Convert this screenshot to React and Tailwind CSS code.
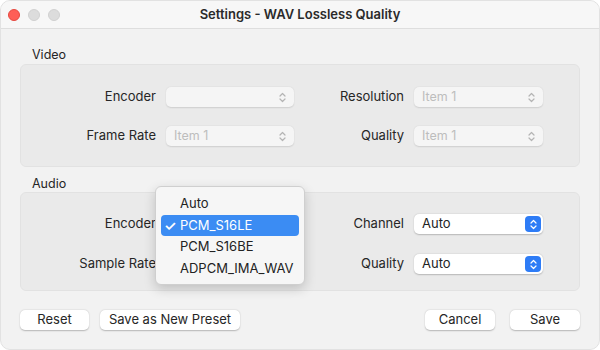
import React from "react";

function Chevrons({ color = "#b4b4b4", w = 7, h = 11 }) {
  return (
    <svg width={w} height={h} viewBox="0 0 7 11" fill="none">
      <path d="M1 4 L3.5 1.5 L6 4" stroke={color} strokeWidth="1.2" strokeLinecap="round" strokeLinejoin="round" />
      <path d="M1 7 L3.5 9.5 L6 7" stroke={color} strokeWidth="1.2" strokeLinecap="round" strokeLinejoin="round" />
    </svg>
  );
}

function DisabledSelect({ value, w }) {
  return (
    <div className={`${w} h-[20px] rounded-[5px] bg-[#f5f5f5] shadow-[0_0.5px_1.5px_rgba(0,0,0,0.12)] flex items-center justify-between pl-[8px] pr-[8px]`}>
      <span className="text-[#bdbdbd] text-[12.5px]">{value}</span>
      <Chevrons />
    </div>
  );
}

function ActiveSelect({ value, w }) {
  return (
    <div className={`${w} h-[20px] rounded-[5px] bg-white shadow-[0_0.5px_1.5px_rgba(0,0,0,0.22)] flex items-center justify-between pl-[8px] pr-[2px]`}>
      <span className="text-[#222] text-[13px]">{value}</span>
      <div className="w-[16px] h-[16px] rounded-[4px] bg-[#2e7cf6] flex items-center justify-center">
        <Chevrons color="#ffffff" w={7} h={11} />
      </div>
    </div>
  );
}

function Label({ children, w }) {
  return <div className={`${w} text-right pr-[10px] text-[13px] text-[#262626]`}>{children}</div>;
}

function Button({ children, w }) {
  return (
    <div className={`${w} h-[20px] rounded-[5px] bg-white shadow-[0_0.5px_1.5px_rgba(0,0,0,0.25)] flex items-center justify-center text-[13px] text-[#262626]`}>
      {children}
    </div>
  );
}

export default function App() {
  return (
    <div className="w-[600px] h-[350px] bg-white" style={{ fontFamily: "Inter, 'Noto Sans', sans-serif" }}>
      <div className="relative w-[600px] h-[350px] rounded-[10px] overflow-hidden bg-[#f2f2f2] border border-[#e2e2e2] flex flex-col">
        {/* Title bar */}
        <div className="h-[28px] shrink-0 bg-[#f7f7f7] border-b border-[#dedede] flex items-center relative">
          <div className="flex items-center gap-[8px] pl-[7px]">
            <div className="w-[12px] h-[12px] rounded-full bg-[#fe5f57] border border-[#e5483f]" />
            <div className="w-[12px] h-[12px] rounded-full bg-[#dcdcdc] border border-[#d0d0d0]" />
            <div className="w-[12px] h-[12px] rounded-full bg-[#dcdcdc] border border-[#d0d0d0]" />
          </div>
          <div className="absolute inset-0 flex items-center justify-center text-[13px] font-semibold text-[#2a2a2a] pointer-events-none">
            Settings - WAV Lossless Quality
          </div>
        </div>

        {/* Body */}
        <div className="flex flex-col px-[19px]">
          <div className="pl-[12px] pt-[18px] h-[35px] text-[12.5px] text-[#262626] leading-[16px]">Video</div>
          <div className="h-[103px] rounded-[6px] bg-[#eaeaea] border border-[#e2e2e2] flex flex-col pt-[22px] gap-[19px]">
            <div className="flex items-center">
              <Label w="w-[145px]">Encoder</Label>
              <DisabledSelect value="" w="w-[128px]" />
              <Label w="w-[120px]">Resolution</Label>
              <DisabledSelect value="Item 1" w="w-[129px]" />
            </div>
            <div className="flex items-center">
              <Label w="w-[145px]">Frame Rate</Label>
              <DisabledSelect value="Item 1" w="w-[128px]" />
              <Label w="w-[120px]">Quality</Label>
              <DisabledSelect value="Item 1" w="w-[129px]" />
            </div>
          </div>

          <div className="pl-[12px] pt-[9px] h-[25px] text-[12.5px] text-[#262626] leading-[16px]">Audio</div>
          <div className="h-[99px] rounded-[6px] bg-[#eaeaea] border border-[#e2e2e2] flex flex-col pt-[21px] gap-[20px]">
            <div className="flex items-center">
              <Label w="w-[145px]">Encoder</Label>
              <ActiveSelect value="" w="w-[128px]" />
              <Label w="w-[120px]">Channel</Label>
              <ActiveSelect value="Auto" w="w-[129px]" />
            </div>
            <div className="flex items-center">
              <Label w="w-[145px]">Sample Rate</Label>
              <ActiveSelect value="" w="w-[128px]" />
              <Label w="w-[120px]">Quality</Label>
              <ActiveSelect value="Auto" w="w-[129px]" />
            </div>
          </div>

          <div className="flex items-center pt-[19px]">
            <Button w="w-[69px]">Reset</Button>
            <div className="w-[11px]" />
            <Button w="w-[140px]">Save as New Preset</Button>
            <div className="flex-1" />
            <Button w="w-[70px]">Cancel</Button>
            <div className="w-[15px]" />
            <Button w="w-[70px]">Save</Button>
          </div>
        </div>

        {/* Popup menu */}
        <div className="absolute left-[154px] top-[185px] w-[150px] h-[99px] rounded-[6px] bg-[#f6f6f6] border border-[#cfcfcf] shadow-[0_4px_12px_rgba(0,0,0,0.18)] flex flex-col px-[5px] pt-[6px] text-[13px] text-[#222]">
          <div className="h-[22px] flex items-center pl-[19px]">Auto</div>
          <div className="h-[21px] flex items-center rounded-[4px] bg-[#3b8cf3] text-white">
            <span className="w-[19px] pl-[3px] text-[14px] font-semibold leading-none">✓</span>
            <span>PCM_S16LE</span>
          </div>
          <div className="h-[22px] flex items-center pl-[19px]">PCM_S16BE</div>
          <div className="h-[22px] flex items-center pl-[19px]">ADPCM_IMA_WAV</div>
        </div>
      </div>
    </div>
  );
}
